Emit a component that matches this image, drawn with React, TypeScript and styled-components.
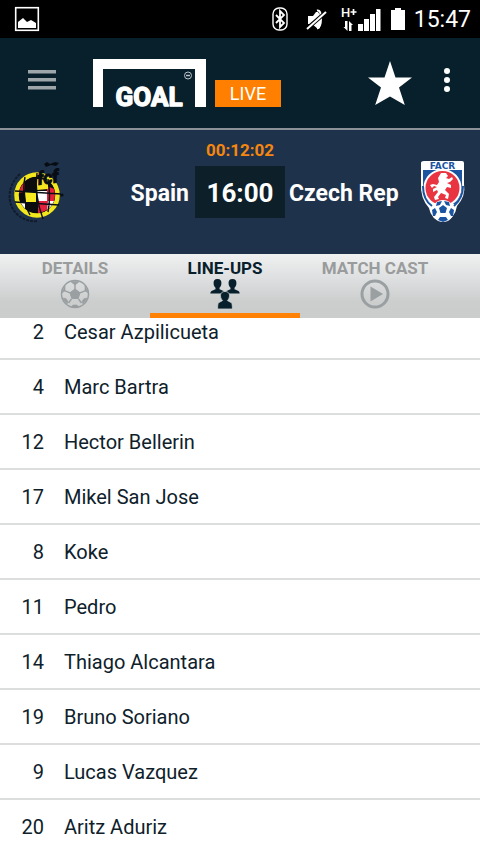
import React from "react";
import styled, { createGlobalStyle } from "styled-components";

const Global = createGlobalStyle`
  * { box-sizing: border-box; }
  html, body, #root { height: 100%; }
  body { margin: 0; background: #fff; font-family: Roboto, "Liberation Sans", sans-serif; color: #0e212b; }
  button { font: inherit; color: inherit; border: 0; padding: 0; background: none; cursor: pointer; }
  svg { display: block; flex: none; }
`;

const Screen = styled.div`
  display: flex;
  flex-direction: column;
  height: 100vh;
  overflow: hidden;
`;

const StatusBar = styled.div`
  display: flex;
  flex: none;
  align-items: center;
  height: 38px;
  padding: 0 9px 0 14px;
  background: #000;
  color: #fff;
`;

const StatusIcons = styled.div`
  display: flex;
  align-items: center;
  margin-left: auto;
`;

const IconSlot = styled.span<{ $gap: number }>`
  margin-right: ${(p) => p.$gap}px;
`;

const Clock = styled.time`
  font-size: 23px;
  line-height: 38px;
  padding-top: 2px;
`;

const Header = styled.header`
  display: flex;
  flex: none;
  align-items: flex-start;
  height: 92px;
  padding: 20px 30px 0 28px;
  background: #08202c;
  border-bottom: 2px solid #8b9196;
`;

const MenuButton = styled.button`
  margin: 12px 37px 0 0;
`;

const LiveBadge = styled.span`
  margin: 22px 0 0 9px;
  width: 66px;
  height: 27px;
  background: #ff8000;
  color: #fff;
  font-size: 18px;
  line-height: 28px;
  text-align: center;
`;

const HeaderActions = styled.div`
  display: flex;
  align-items: flex-start;
  gap: 32px;
  margin-left: auto;
`;

const MoreButton = styled.button`
  margin-top: 9px;
`;

const Match = styled.section`
  flex: none;
  height: 124px;
  padding-top: 9px;
  background: #1e324b;
  color: #fff;
`;

const Countdown = styled.div`
  color: #f5860f;
  font-size: 17px;
  font-weight: 700;
  line-height: 22px;
  text-align: center;
`;

const Fixture = styled.div`
  display: grid;
  grid-template-columns: 1fr 90px 1fr;
  align-items: center;
  margin-top: 5px;
`;

const Side = styled.div`
  display: flex;
  align-items: center;
  justify-content: space-between;
  height: 52px;
  padding: 0 6px 0 7px;

  &:last-child {
    padding: 0 14px 0 4px;
  }
`;

const TeamName = styled.span`
  padding-top: 2px;
  font-size: 23px;
  font-weight: 700;
`;

const Kickoff = styled.time`
  height: 52px;
  background: #0d1f29;
  font-size: 26px;
  font-weight: 700;
  line-height: 54px;
  text-align: center;
`;

const Tabs = styled.div`
  display: flex;
  flex: none;
  height: 64px;
  padding-right: 30px;
  background: linear-gradient(#f0f1f1, #dcdedf 40%, #cccece 75%, #cbcccc);
`;

const Tab = styled.button<{ $active?: boolean }>`
  display: flex;
  flex: 1;
  flex-direction: column;
  align-items: center;
  gap: 1px;
  padding-top: 4px;
  border-bottom: 5px solid ${(p) => (p.$active ? "#ff8205" : "transparent")};
  color: ${(p) => (p.$active ? "#08202c" : "#999b9c")};
  font-size: 17px;
  font-weight: 700;
  line-height: 20px;
  white-space: nowrap;
`;

const ListViewport = styled.main`
  flex: 1;
  min-height: 0;
  overflow: hidden;
`;

const PlayerList = styled.ul`
  margin: -13px 0 0;
  padding: 0;
  list-style: none;
`;

const PlayerRow = styled.li`
  display: flex;
  align-items: center;
  gap: 20px;
  height: 55px;
  border-bottom: 2px solid #dcdddd;
  font-size: 20px;

  &:last-child {
    border-bottom-color: transparent;
  }
`;

const ShirtNumber = styled.span`
  width: 44px;
  text-align: right;
`;

const players: [number, string][] = [
  [2, "Cesar Azpilicueta"],
  [4, "Marc Bartra"],
  [12, "Hector Bellerin"],
  [17, "Mikel San Jose"],
  [8, "Koke"],
  [11, "Pedro"],
  [14, "Thiago Alcantara"],
  [19, "Bruno Soriano"],
  [9, "Lucas Vazquez"],
  [20, "Aritz Aduriz"],
];

const PictureIcon = () => (
  <svg width="26" height="26" viewBox="0 0 26 26">
    <rect x="1.7" y="1.7" width="22.6" height="22.6" fill="none" stroke="#fff" strokeWidth="1.6" />
    <path d="M4 22v-6l5-4 4 4 4-2 5 3v5z" fill="#fff" />
  </svg>
);

const BluetoothIcon = () => (
  <svg width="16" height="24" viewBox="0 0 16 24" fill="none" stroke="#fff">
    <rect x="1" y="1" width="14" height="22" rx="6" strokeWidth="1.4" />
    <path d="M4 8l8 8-4 4V4l4 4-8 8" strokeWidth="1.8" />
  </svg>
);

const MutedIcon = () => (
  <svg width="22" height="22" viewBox="0 0 22 22">
    <path d="M2 8h5l3-4 2 0 2 3v13l-2 1-6-5H2z" fill="#fff" />
    <path d="M11 2.500q4-1 4 8t-4 10" fill="none" stroke="#fff" strokeWidth="2" />
    <path d="M0 21.500L19 5" stroke="#000" strokeWidth="4" />
    <path d="M1 21L20 4" stroke="#fff" strokeWidth="2" />
  </svg>
);

const SignalIcon = () => (
  <svg width="40" height="26" viewBox="0 0 40 26" fill="#fff">
    <text x="0" y="11" fontFamily="Roboto, sans-serif" fontSize="13" fontWeight="500">H</text>
    <path d="M9.500 6h6M12.500 3v6" stroke="#fff" strokeWidth="1.700" />
    <path d="M4 15h2.500v10l-4-4H4zM8 25V15l4 4h-1.500v6z" />
    <path d="M17 18h5v7h-5zM23 13h5v12h-5zM29 8h5v17h-5zM35 3h4.500v22H35z" />
  </svg>
);

const BatteryIcon = () => (
  <svg width="14" height="22" viewBox="0 0 14 22">
    <path d="M0 2h4V0h6v2h4v20H0z" fill="#fff" />
  </svg>
);

const MenuIcon = () => (
  <svg width="28" height="20" viewBox="0 0 28 20" fill="#9ea6aa">
    <path d="M0 0h28v3.500H0zM0 8h28v3.500H0zM0 16h28v3.500H0z" />
  </svg>
);

const GoalLogo = () => (
  <svg width="113" height="60" viewBox="0 0 113 60" role="img" aria-label="Goal">
    <path d="M0 1h113v48h-11V11H10v38H0z" fill="#fff" />
    <text x="56" y="48" textAnchor="middle" fill="#fff" stroke="#fff" strokeWidth="1.4" strokeLinejoin="round" fontFamily="Roboto, sans-serif" fontSize="26" fontWeight="700">GOAL</text>
    <circle cx="95" cy="17.500" r="3.500" fill="none" stroke="#bac3c8" strokeWidth="1" />
    <path d="M93 17.500h4" stroke="#bac3c8" strokeWidth="1.500" />
  </svg>
);

const StarIcon = () => (
  <svg width="44" height="48" viewBox="0 0 44 48">
    <path d="M22 3l5.500 16.500H44L31 29.500 36.800 47 22 38.500 7.200 47 13 29.500 0 19.500h16.500z" fill="#fff" />
  </svg>
);

const MoreIcon = () => (
  <svg width="6" height="26" viewBox="0 0 6 26" fill="#fff">
    <circle cx="3" cy="4" r="3" />
    <circle cx="3" cy="13" r="3" />
    <circle cx="3" cy="22" r="3" />
  </svg>
);

const SpainCrest = () => (
  <svg width="59" height="64" viewBox="0 0 59 64" role="img" aria-label="Spain crest">
    <defs>
      <clipPath id="spain-ball"><circle cx="30" cy="35" r="18" /></clipPath>
    </defs>
    <path d="M13 14C0 25-1 45 11 55c6 5 13 7 20 6" fill="none" stroke="#101c2b" strokeWidth="2" strokeDasharray="3 1" />
    <circle cx="30" cy="35" r="20.500" fill="#14140e" stroke="#f2e71d" strokeWidth="4.500" />
    <g clipPath="url(#spain-ball)">
      <path d="M11 15h40v40H11z" fill="#0c0c0e" />
      <path d="M11 25l7-3-1 10-6 1z" fill="#d82935" />
      <path d="M18 32h11v10H19z" fill="#f8ea20" />
      <path d="M11 42h7v10h-7z" fill="#fff" />
      <path d="M30 31h10v10H31z" fill="#fff" />
      <path d="M40 26l10 4v11H40zM31 41h10l-1 9-9 4z" fill="#e4213c" />
      <path d="M41 41h8l-5 8-4 1z" fill="#fff" />
      <path d="M30 19l11 1v9l-11 1z" fill="#f5e41f" />
    </g>
    <path d="M18 17q-4 22 5 38M30 13q-3 22 6 46M41 19q3 17 0 33M8 31l46 3M8 42l44 3" fill="none" stroke="#0a0e13" strokeWidth="1.400" />
    <circle cx="55" cy="35" r="1.600" fill="#0a0e13" />
    <text x="31" y="25" transform="rotate(-8 31 25)" fill="#080d13" stroke="#080d13" fontFamily="Roboto, sans-serif" fontSize="18" fontStyle="italic" fontWeight="700">fcf</text>
    <path d="M37 4l3-2 3 2 5-2 4 1-3 3-5-1-5 2z" fill="#080d13" />
  </svg>
);

const CzechCrest = () => (
  <svg width="46" height="64" viewBox="0 0 46 64" role="img" aria-label="Czech Republic crest">
    <path d="M4 1h38q2 0 2 2v21q2 12-7 22-2 13-14 16-12-2-14-14Q0 38 1 23V3q0-2 3-2z" fill="#fff" />
    <path d="M3 10h39v13q2 11-7 21H15Q2 40 3 25z" fill="#1b55a2" />
    <circle cx="22.500" cy="28" r="18" fill="#e93442" stroke="#fff" strokeWidth="2" />
    <path d="M3 26q0 14 9 20M43 26q0 12-9 20" fill="none" stroke="#1b55a2" strokeWidth="2" />
    <text x="22.500" y="8.500" textAnchor="middle" fill="#1b55a2" fontFamily="DejaVu Sans, sans-serif" fontSize="9" fontWeight="700">FACR</text>
    <path d="M18 18l3-5h5l2 3-2 2 3 1 3-2 1 2-3 3-3 1 4 2v3l-4-1-2 3 4 4-1 5-3-1 1-3-5-2-3 4 1 2-4 1-1-3 4-5-1-2-4 2v-3l4-2-3-1-2 2-2-3 3-1 4 1 2-3z" fill="#fff" />
    <circle cx="23" cy="51" r="11" fill="#fff" />
    <path d="M19 48l4-3 4 3-1.500 5h-5zM12 50l3-2 2 4-2 4h-2zM34 50l-3-2-2 4 2 4h2zM18 60l2-3h6l2 3-5 2zM17 42l5-1-2 4-4 1zM29 42l-5-1 2 4 4 1z" fill="#1b55a2" />
  </svg>
);

const BallIcon = () => (
  <svg width="30" height="30" viewBox="0 0 30 30" fill="none" stroke="#9a9fa1">
    <circle cx="15" cy="15" r="13.500" strokeWidth="1.500" />
    <path d="M15 10l5 3.800-1.800 5.700h-6.400L10 13.800z" fill="#9a9fa1" />
    <path d="M15 10V5M20 13.800l5-2M18.500 20l3 4M11.500 20l-3 4M10 13.800l-5-2" strokeWidth="1.400" />
    <path d="M10.500 2.500h9L15 6zM25 7l3.500 7-3.500-2zM28 19l-5 6-1-2.500 2-3zM19 28h-8l2-2h4zM7 25L2 19l4 .5 2 3zM1.500 14L5 7v5z" fill="#9a9fa1" strokeWidth=".6" />
  </svg>
);

const TeamIcon = () => (
  <svg width="30" height="30" viewBox="0 0 30 30" fill="#08202c">
    <defs>
      <path id="person" d="M7.500 0C4.500 0 3.300 2 3.600 4.500c.1 2 .9 3.500 1.900 4.300v1.400L1.500 12Q.4 12.500.3 14.500h14.400q-.1-2-1.200-2.500L9.500 10.200V8.800c1-.8 1.800-2.300 1.900-4.300C11.700 2 10.500 0 7.500 0z" />
    </defs>
    <use href="#person" />
    <use href="#person" x="15" />
    <path d="M15 12.500c-3.500 0-4.800 2.300-4.400 5 .1 1.500.9 3.100 2 4l-4 2.200c-.8.500-1 3.300-1 6.300h14.800c0-3-.2-5.800-1-6.300l-4-2.200c1.100-.9 1.900-2.500 2-4 .4-2.700-.9-5-4.400-5z" stroke="#d1d3d4" strokeWidth=".8" />
  </svg>
);

const PlayIcon = () => (
  <svg width="30" height="30" viewBox="0 0 30 30">
    <circle cx="15" cy="15" r="13" fill="none" stroke="#9a9fa1" strokeWidth="3" />
    <path d="M10.500 7.500L23 15l-12.500 7.500z" fill="#9a9fa1" />
  </svg>
);

export default function App() {
  return (
    <Screen>
      <Global />
      <StatusBar>
        <PictureIcon />
        <StatusIcons>
          <IconSlot $gap={18}><BluetoothIcon /></IconSlot>
          <IconSlot $gap={13}><MutedIcon /></IconSlot>
          <IconSlot $gap={10}><SignalIcon /></IconSlot>
          <IconSlot $gap={9}><BatteryIcon /></IconSlot>
          <Clock>15:47</Clock>
        </StatusIcons>
      </StatusBar>
      <Header>
        <MenuButton aria-label="Menu"><MenuIcon /></MenuButton>
        <GoalLogo />
        <LiveBadge>LIVE</LiveBadge>
        <HeaderActions>
          <button aria-label="Favourite"><StarIcon /></button>
          <MoreButton aria-label="More options"><MoreIcon /></MoreButton>
        </HeaderActions>
      </Header>
      <Match>
        <Countdown>00:12:02</Countdown>
        <Fixture>
          <Side><SpainCrest /><TeamName>Spain</TeamName></Side>
          <Kickoff>16:00</Kickoff>
          <Side><TeamName>Czech Rep</TeamName><CzechCrest /></Side>
        </Fixture>
      </Match>
      <Tabs role="tablist">
        <Tab role="tab" aria-selected={false}>DETAILS<BallIcon /></Tab>
        <Tab role="tab" aria-selected $active>LINE-UPS<TeamIcon /></Tab>
        <Tab role="tab" aria-selected={false}>MATCH CAST<PlayIcon /></Tab>
      </Tabs>
      <ListViewport>
        <PlayerList>
          {players.map(([number, name]) => (
            <PlayerRow key={number}>
              <ShirtNumber>{number}</ShirtNumber>
              <span>{name}</span>
            </PlayerRow>
          ))}
        </PlayerList>
      </ListViewport>
    </Screen>
  );
}
